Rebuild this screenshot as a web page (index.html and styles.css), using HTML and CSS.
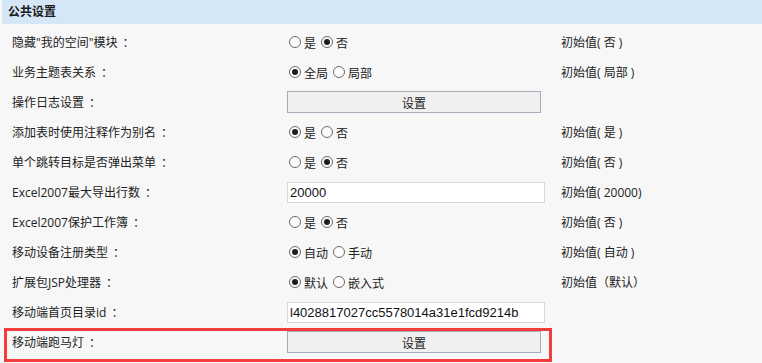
FILE: index.html
```html
<!DOCTYPE html>
<html lang="zh-CN">
<head>
<meta charset="utf-8">
<title>公共设置</title>
<link rel="stylesheet" href="styles.css">
</head>
<body>
<div class="panel">
  <div class="header">公共设置</div>
  <div class="rows">
    <div class="row">
      <div class="label">隐藏"我的空间"模块<span class="colon">：</span></div>
      <div class="ctrl">
        <label class="opt"><input type="radio" name="r1">是</label>
        <label class="opt"><input type="radio" name="r1" checked>否</label>
      </div>
      <div class="init">初始值( 否 )</div>
    </div>
    <div class="row">
      <div class="label">业务主题表关系<span class="colon">：</span></div>
      <div class="ctrl">
        <label class="opt"><input type="radio" name="r2" checked>全局</label>
        <label class="opt"><input type="radio" name="r2">局部</label>
      </div>
      <div class="init">初始值( 局部 )</div>
    </div>
    <div class="row">
      <div class="label">操作日志设置<span class="colon">：</span></div>
      <div class="ctrl"><button class="btn" type="button">设置</button></div>
      <div class="init"></div>
    </div>
    <div class="row">
      <div class="label">添加表时使用注释作为别名<span class="colon">：</span></div>
      <div class="ctrl">
        <label class="opt"><input type="radio" name="r3" checked>是</label>
        <label class="opt"><input type="radio" name="r3">否</label>
      </div>
      <div class="init">初始值( 是 )</div>
    </div>
    <div class="row">
      <div class="label">单个跳转目标是否弹出菜单<span class="colon">：</span></div>
      <div class="ctrl">
        <label class="opt"><input type="radio" name="r4">是</label>
        <label class="opt"><input type="radio" name="r4" checked>否</label>
      </div>
      <div class="init">初始值( 否 )</div>
    </div>
    <div class="row">
      <div class="label">Excel2007最大导出行数<span class="colon">：</span></div>
      <div class="ctrl"><input class="txt" type="text" value="20000"></div>
      <div class="init">初始值( 20000)</div>
    </div>
    <div class="row">
      <div class="label">Excel2007保护工作簿<span class="colon">：</span></div>
      <div class="ctrl">
        <label class="opt"><input type="radio" name="r5">是</label>
        <label class="opt"><input type="radio" name="r5" checked>否</label>
      </div>
      <div class="init">初始值( 否 )</div>
    </div>
    <div class="row">
      <div class="label">移动设备注册类型<span class="colon">：</span></div>
      <div class="ctrl">
        <label class="opt"><input type="radio" name="r6" checked>自动</label>
        <label class="opt"><input type="radio" name="r6">手动</label>
      </div>
      <div class="init">初始值( 自动 )</div>
    </div>
    <div class="row">
      <div class="label">扩展包JSP处理器<span class="colon">：</span></div>
      <div class="ctrl">
        <label class="opt"><input type="radio" name="r7" checked>默认</label>
        <label class="opt"><input type="radio" name="r7">嵌入式</label>
      </div>
      <div class="init">初始值（默认）</div>
    </div>
    <div class="row">
      <div class="label">移动端首页目录id<span class="colon">：</span></div>
      <div class="ctrl"><input class="txt" type="text" value="l4028817027cc5578014a31e1fcd9214b"></div>
      <div class="init"></div>
    </div>
    <div class="row highlighted">
      <div class="label">移动端跑马灯<span class="colon">：</span></div>
      <div class="ctrl"><button class="btn" type="button">设置</button></div>
      <div class="init"></div>
    </div>
  </div>
</div>
</body>
</html>
```

FILE: styles.css
```css
html, body {
  margin: 0;
  padding: 0;
  background: #f7f7f7;
  overflow: hidden;
}
body {
  font-family: "Open Sans", "Noto Sans CJK SC", sans-serif;
  font-size: 12px;
  color: #222;
}
.panel {
  width: 762px;
  height: 363px;
}
.header {
  margin-left: 2px;
  height: 24px;
  line-height: 24px;
  background: #d5e6f6;
  padding-left: 6px;
  font-weight: bold;
  color: #1a1a1a;
}
.rows {
  padding-top: 3px;
}
.row {
  display: grid;
  grid-template-columns: 275px 274px 1fr;
  align-items: center;
  height: 30px;
  padding-left: 12px;
}
.label {
  white-space: nowrap;
}
.colon {
  font-family: "Noto Sans CJK SC", sans-serif;
  padding-left: 5px;
}
.highlighted {
  position: relative;
}
.highlighted::after {
  content: "";
  position: absolute;
  left: 4px;
  top: 1px;
  width: 542px;
  height: 28px;
  border: 3px solid #f53b3b;
}
.ctrl {
  display: flex;
  align-items: center;
}
.opt {
  display: inline-flex;
  align-items: center;
  margin-right: 3px;
  font-family: "Noto Sans CJK SC", sans-serif;
}
.opt input {
  appearance: none;
  -webkit-appearance: none;
  width: 12px;
  height: 12px;
  margin: 0 3px 0 2px;
  border: 1px solid #6b6b6b;
  border-radius: 50%;
  background: #fbfbfb;
  box-sizing: border-box;
  position: relative;
}
.opt input:checked::after {
  content: "";
  position: absolute;
  left: 2px;
  top: 2px;
  width: 6px;
  height: 6px;
  border-radius: 50%;
  background: #1e1e1e;
}
.btn {
  width: 254px;
  height: 22px;
  margin: 0;
  padding: 0;
  border: 1px solid #a3adba;
  background: #f0f0f0;
  font-family: "Noto Sans CJK SC", sans-serif;
  font-size: 12px;
  color: #222;
}
.txt {
  width: 258px;
  height: 21px;
  margin: 0;
  padding: 0 2px;
  box-sizing: border-box;
  border: 1px solid #d8d8d8;
  background: #fff;
  font-family: "Liberation Sans", sans-serif;
  font-size: 13px;
  color: #111;
  outline: none;
}
.init {
  white-space: nowrap;
}
```
